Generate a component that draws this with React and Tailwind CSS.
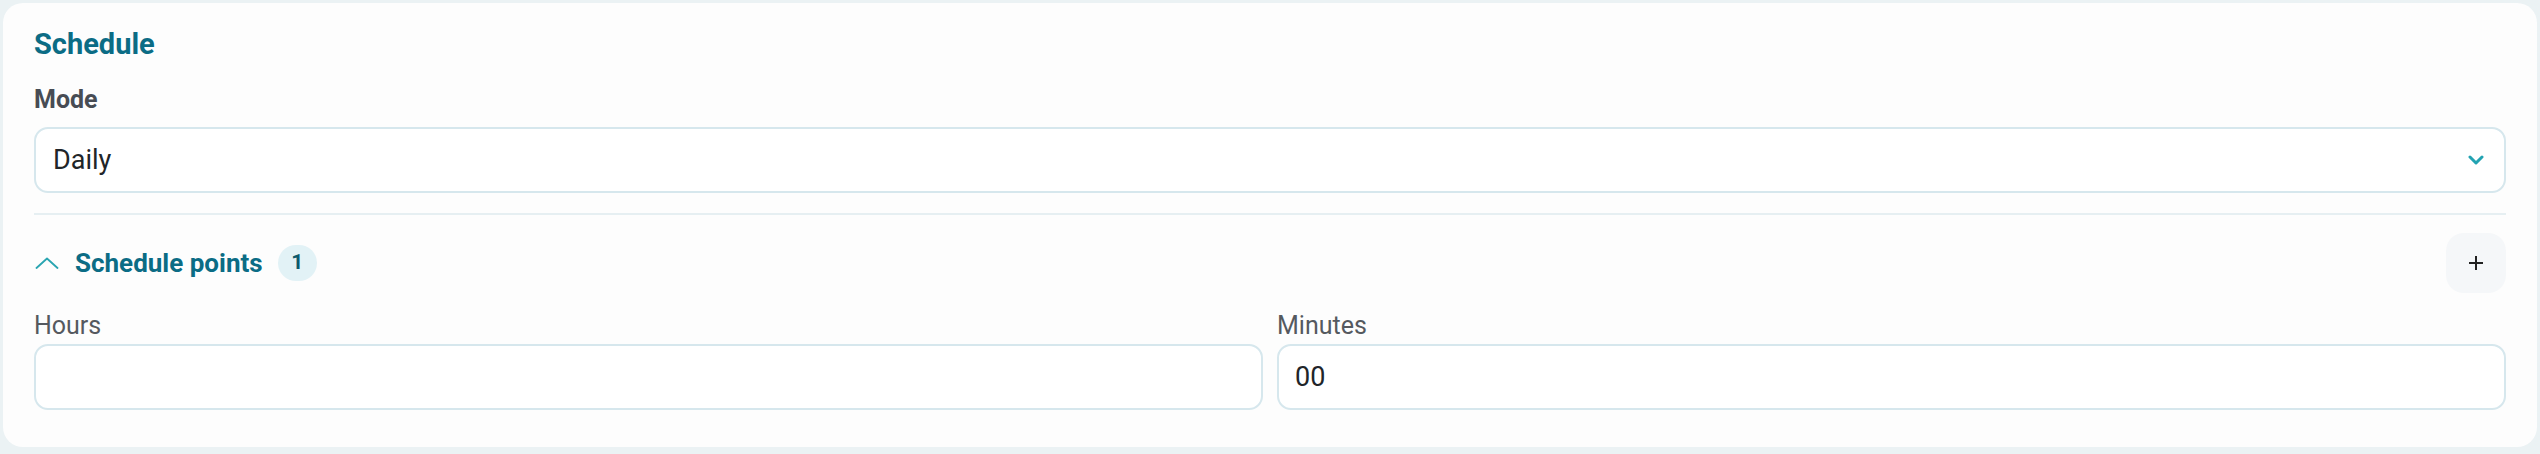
import { useState } from 'react';

function ChevronDown() {
  return (
    <svg width="16" height="10" viewBox="0 0 16 10" fill="none">
      <path d="M2 2l6 6 6-6" stroke="#22a3b2" strokeWidth="3" strokeLinecap="round" strokeLinejoin="round" />
    </svg>
  );
}

function ChevronUp() {
  return (
    <svg width="24" height="12" viewBox="0 0 24 12" fill="none">
      <path d="M1.5 11L12 1.5 22.5 11" stroke="#2aa5b1" strokeWidth="1.8" strokeLinecap="round" strokeLinejoin="round" />
    </svg>
  );
}

function Plus() {
  return (
    <svg width="16" height="16" viewBox="0 0 16 16" fill="none">
      <path d="M8 1v14M1 8h14" stroke="#222" strokeWidth="2" />
    </svg>
  );
}

export default function App() {
  const [mode, setMode] = useState('Daily');
  const [open, setOpen] = useState(true);
  const [hours, setHours] = useState('');
  const [minutes, setMinutes] = useState('00');

  return (
    <div className="min-h-[454px] bg-[#ebf2f4] pt-[3px] px-[3px] pb-[8px] font-['Roboto',sans-serif]">
      <div className="rounded-[20px] bg-[#fdfdfd] px-[31px] pt-[24px] pb-[37px]">
        <h2 className="text-[29px] leading-[35px] font-bold text-[#0b6c85]">Schedule</h2>

        <label className="mt-[23px] block text-[25px] leading-[29px] font-bold text-[#474c54]">Mode</label>
        <div className="relative mt-[13px]">
          <select
            value={mode}
            onChange={(e) => setMode(e.target.value)}
            className="h-[66px] w-full appearance-none rounded-[14px] border-2 border-[#d6e7ed] bg-white pl-[17px] pr-[60px] text-[27px] text-[#212529] focus:outline-none"
          >
            <option>Daily</option>
            <option>Weekly</option>
            <option>Monthly</option>
          </select>
          <div className="pointer-events-none absolute right-[22px] top-1/2 -translate-y-1/2">
            <ChevronDown />
          </div>
        </div>

        <div className="mt-[20px] h-[2px] bg-[#e6eff2]" />

        <div className="mt-[18px] flex h-[60px] items-center">
          <button onClick={() => setOpen(!open)} className="flex items-center">
            <span className="ml-[1px] mr-[16px] flex">
              <ChevronUp />
            </span>
            <span className="text-[26px] font-bold text-[#0b6c85]">Schedule points</span>
          </button>
          <span className="ml-[15px] flex h-[36px] w-[39px] items-center justify-center rounded-full bg-[#e2f2f6] text-[21px] font-bold text-[#0d5a6c]">
            1
          </span>
          <button className="ml-auto flex h-[60px] w-[60px] items-center justify-center rounded-[18px] bg-[#f5f7f9]">
            <Plus />
          </button>
        </div>

        {open && (
          <div className="mt-[18px] grid grid-cols-2 gap-x-[14px]">
            <div>
              <label className="block text-[25px] leading-[29px] text-[#55595f]">Hours</label>
              <input
                value={hours}
                onChange={(e) => setHours(e.target.value)}
                className="mt-[4px] h-[66px] w-full rounded-[14px] border-2 border-[#d6e7ed] bg-white px-[16px] text-[27px] text-[#212529] focus:outline-none"
              />
            </div>
            <div>
              <label className="block text-[25px] leading-[29px] text-[#55595f]">Minutes</label>
              <input
                value={minutes}
                onChange={(e) => setMinutes(e.target.value)}
                className="mt-[4px] h-[66px] w-full rounded-[14px] border-2 border-[#d6e7ed] bg-white px-[16px] text-[27px] text-[#212529] focus:outline-none"
              />
            </div>
          </div>
        )}
      </div>
    </div>
  );
}
